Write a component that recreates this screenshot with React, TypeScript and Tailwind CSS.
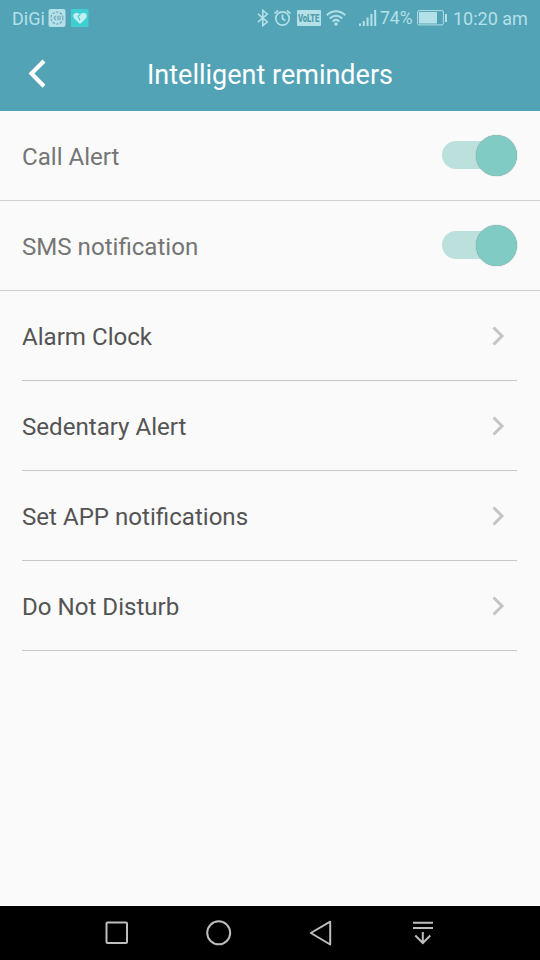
import { useState } from "react";

const links = ["Alarm Clock", "Sedentary Alert", "Set APP notifications", "Do Not Disturb"];

function StatusBar() {
  return (
    <div className="flex h-9 items-center pl-3 text-[#b4e0e8]">
      <span className="w-9 pt-px text-[18px] leading-9">DiGi</span>
      <svg className="h-[18px] w-[18px]" viewBox="0 0 18 18" fill="none">
        <rect x="0.5" y="0" width="17" height="18" rx="2" fill="#b4e0e8" />
        <circle cx="9" cy="9" r="6" stroke="#6ba3b1" strokeWidth="1.1" strokeDasharray="2.4 1.4" />
        <path d="M8 6.8 6 9l2 2.2M10 6.8v4.4M12 6.8v4.4" stroke="#6ba3b1" strokeWidth="1.1" />
      </svg>
      <svg className="ml-[5px] h-[18px] w-[18px]" viewBox="0 0 18 18" fill="none">
        <rect width="17.5" height="18" rx="1" fill="#3fcfd2" />
        <path
          d="M9 15 3.3 9.4C1.4 7.4 2.2 4 5.2 4 7 4 8.3 4.6 9 5.4c.7-.8 2-1.4 3.8-1.4 3 0 3.8 3.4 1.9 5.4z"
          fill="#c3eff1"
        />
        <path d="M9.4 5.8C7 6.2 6.4 8.200 8.2 9.200c.9.600.6 1.500-.2 2" stroke="#3fcfd2" strokeWidth="1.2" />
      </svg>

      <svg className="ml-[168px] h-[18px] w-3" viewBox="0 0 12 18" fill="none" stroke="currentColor" strokeWidth="1.6">
        <path d="M1 4.8 10.3 13 5.8 16.600V1.400l4.500 3.600L1 13.2" />
      </svg>
      <svg className="ml-[5px] h-[18px] w-[18px]" viewBox="0 0 18 18" fill="none" stroke="currentColor" strokeWidth="1.7">
        <circle cx="8.5" cy="9.5" r="6.7" />
        <path d="M8.5 5.5v4l2.7 2.2M.5 4.6 4.1 1.5M12.9 1.5l3.6 3.1" />
      </svg>
      <span className="ml-[5px] flex h-4 w-6 items-center justify-center rounded-[1px] bg-[#b4e0e8]">
        <span className="scale-x-[0.78] text-[10px] font-black tracking-[-0.2px] text-[#4f9cad]">VoLTE</span>
      </span>
      <svg className="ml-[5px] h-[18px] w-5" viewBox="0 0 20 18" fill="none" stroke="currentColor" strokeWidth="2">
        <path d="M.8 6.2C6 .9 14 .9 19.2 6.2M3.8 9.5c3.6-3.6 8.8-3.6 12.4 0M6.6 12.5c2-1.9 4.8-1.9 6.8 0" />
        <circle cx="10" cy="15" r="1.8" fill="currentColor" stroke="none" />
      </svg>
      <svg className="ml-[13px] h-[18px] w-[18px]" viewBox="0 0 18 18" fill="currentColor">
        <path d="M0 14.5h2V17H0zM3.8 12h2v5h-2zM7.6 8.5h2V17h-2zM11.4 5h2v12h-2zM15.2 1h2v16h-2z" />
      </svg>
      <span className="ml-[3px] w-[34px] text-[17.5px] leading-8">74%</span>
      <svg className="ml-[3px] h-4 w-[31px]" viewBox="0 0 31 16" fill="none">
        <rect x="0.6" y="0.6" width="25.8" height="14.3" rx="1.5" stroke="currentColor" />
        <rect x="2" y="2" width="18" height="11.5" fill="currentColor" />
        <path d="M29 4v8" stroke="currentColor" strokeWidth="2" />
      </svg>
      <span className="ml-[5px] pt-px text-[18px] leading-9 whitespace-nowrap">10:20 am</span>
    </div>
  );
}

function Toggle({ label }: { label: string }) {
  const [on, setOn] = useState(true);

  return (
    <div className="flex h-[90px] items-center justify-between border-b border-[#cfcfcf] pr-[23px] pl-[22px]">
      <span className="pt-1 text-[24.1px] text-[#757575]">{label}</span>
      <button
        role="switch"
        aria-checked={on}
        aria-label={label}
        onClick={() => setOn(!on)}
        className={`mb-px flex h-7 w-[75px] items-center rounded-full ${on ? "justify-end bg-[#bce1dc]" : "justify-start bg-[#c4c4c4]"}`}
      >
        <span
          className={`size-[41px] rounded-full shadow-[0_0_1px_rgba(0,0,0,0.5)] ${on ? "bg-[#80cbc4]" : "bg-[#f1f1f1]"}`}
        />
      </button>
    </div>
  );
}

function NavBar() {
  return (
    <nav className="flex h-[54px] items-center gap-[78px] bg-black pl-[105px] text-[#bdbdbd]">
      <svg className="size-6" viewBox="0 0 24 24" fill="none" stroke="currentColor" strokeWidth="2">
        <rect x="1.5" y="1.5" width="20.5" height="20.5" rx="1" />
      </svg>
      <svg className="size-6 overflow-visible" viewBox="0 0 24 24" fill="none" stroke="currentColor" strokeWidth="2">
        <circle cx="11.7" cy="11.8" r="11.5" />
      </svg>
      <svg className="size-6 overflow-visible" viewBox="0 0 24 24" fill="none" stroke="currentColor" strokeWidth="2">
        <path d="M21.2.7v22.8L1.8 12z" strokeLinejoin="round" />
      </svg>
      <svg className="size-6" viewBox="0 0 24 24" fill="none" stroke="currentColor" strokeWidth="2">
        <path d="M2 1.8h20M2 7.1h20M11.8 11v11M4.3 14.5l7.5 7.5 7.5-7.5" />
      </svg>
    </nav>
  );
}

export default function App() {
  return (
    <div className="flex h-[960px] w-[540px] flex-col overflow-hidden bg-[#fafafa] font-[Roboto,sans-serif]">
      <header className="h-[111px] bg-[#52a3b6]">
        <StatusBar />
        <div className="grid h-[75px] grid-cols-[60px_1fr_60px] items-center">
          <button aria-label="Back" className="pl-7">
            <svg className="h-8 w-5" viewBox="0 0 20 32" fill="none" stroke="white" strokeWidth="4.2">
              <path d="M16 3 3.5 15.6 16 28.2" />
            </svg>
          </button>
          <h1 className="pt-1 text-center text-[27px] text-white">Intelligent reminders</h1>
        </div>
      </header>

      <main className="flex-1">
        <Toggle label="Call Alert" />
        <Toggle label="SMS notification" />
        {links.map((label) => (
          <a
            key={label}
            className="mr-[23px] ml-[22px] flex h-[90px] items-center justify-between border-b border-[#c8c8c8] pr-3"
          >
            <span className="pt-1 text-[24.1px] text-[#545454]">{label}</span>
            <svg className="h-5 w-[14px]" viewBox="0 0 14 20" fill="none" stroke="#c4c4c4" strokeWidth="3">
              <path d="M2.5 1.5 11 10l-8.5 8.5" />
            </svg>
          </a>
        ))}
      </main>

      <NavBar />
    </div>
  );
}
